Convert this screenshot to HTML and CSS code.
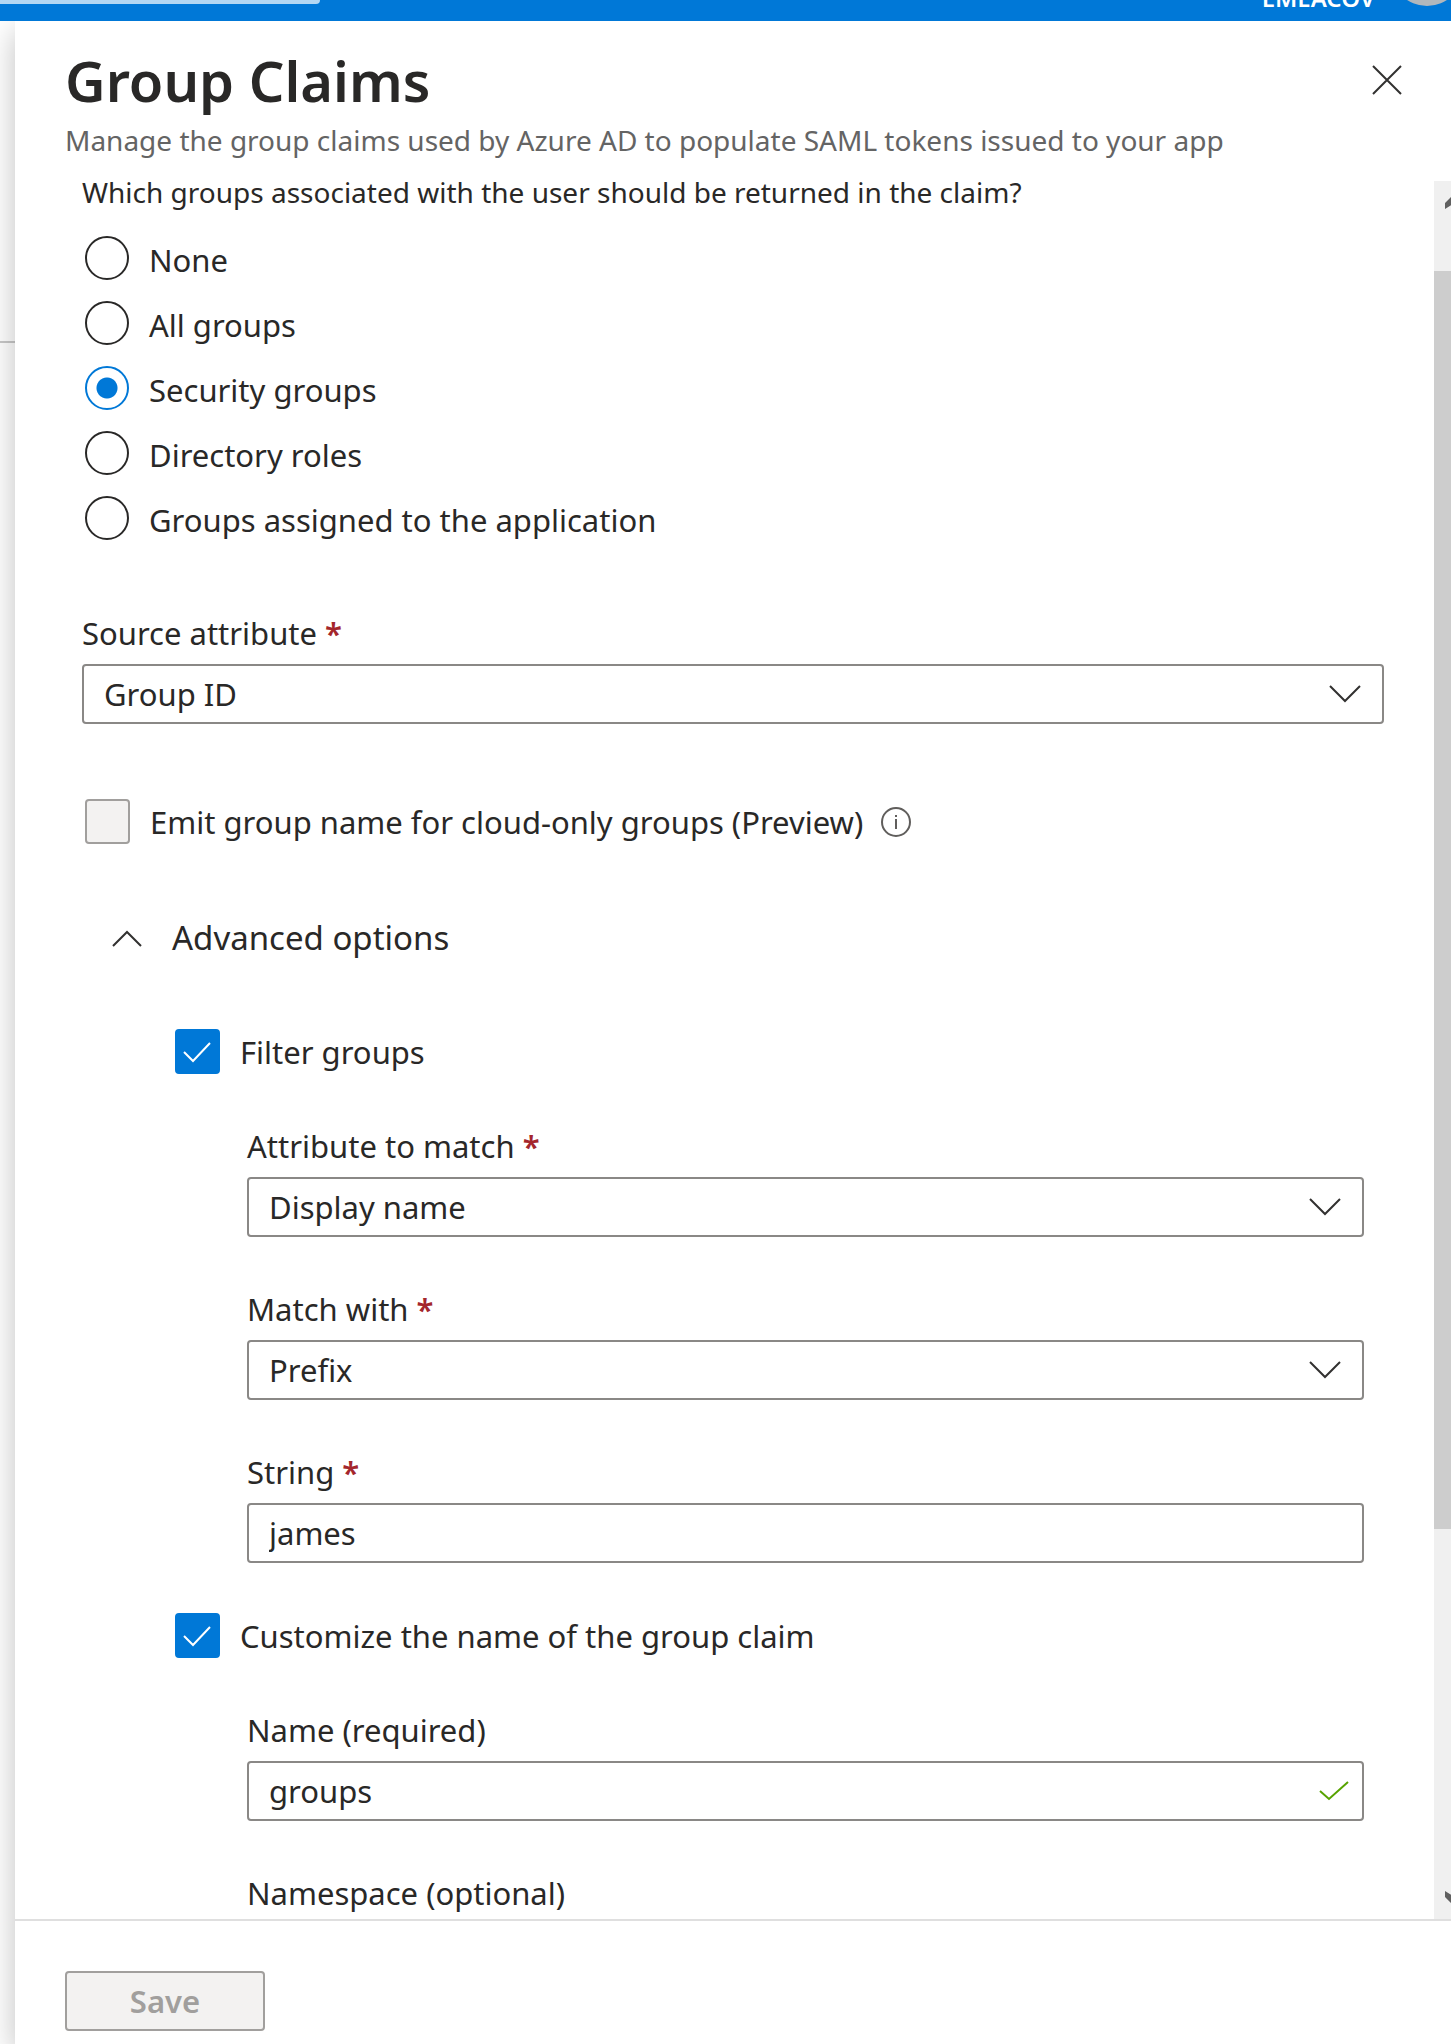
FILE: index.html
```html
<!DOCTYPE html>
<html lang="en">
<head>
    <meta charset="UTF-8">
    <meta name="viewport" content="width=device-width, initial-scale=1.0">
    <title>Group Claims</title>
    <link rel="stylesheet" href="styles.css">
</head>
<body>
    <div class="topbar">
        <div class="search"></div>
        <span class="tenant">EMEACOV</span>
        <div class="avatar"></div>
    </div>
    <div class="main">
        <div class="page-behind"></div>
        <div class="panel">
            <header class="panel-header">
                <div class="title-row">
                    <h1>Group Claims</h1>
                    <button type="button" class="close" aria-label="Close">
                        <svg width="30" height="30" viewBox="0 0 30 30"><path d="M1 1l28 28M29 1L1 29"/></svg>
                    </button>
                </div>
                <p class="subtitle">Manage the group claims used by Azure AD to populate SAML tokens issued to your app</p>
            </header>

            <div class="scroll-area">
                <form class="content" id="claimsForm">
                    <fieldset class="radios">
                        <legend>Which groups associated with the user should be returned in the claim?</legend>
                        <label class="option"><input type="radio" name="groups"> None</label>
                        <label class="option"><input type="radio" name="groups"> All groups</label>
                        <label class="option"><input type="radio" name="groups" checked> Security groups</label>
                        <label class="option"><input type="radio" name="groups"> Directory roles</label>
                        <label class="option"><input type="radio" name="groups"> Groups assigned to the application</label>
                    </fieldset>

                    <div class="field source">
                        <label for="source">Source attribute <span class="required">*</span></label>
                        <div class="control">
                            <select id="source"><option>Group ID</option></select>
                            <svg class="chevron" width="32" height="18" viewBox="0 0 32 18"><path d="M1 1l15 15L31 1"/></svg>
                        </div>
                    </div>

                    <div class="option-row emit">
                        <label class="option"><input type="checkbox" disabled> Emit group name for cloud-only groups (Preview)</label>
                        <svg class="info" width="30" height="30" viewBox="0 0 30 30">
                            <circle cx="15" cy="15" r="14"/>
                            <path d="M15 12v10M15 8v2"/>
                        </svg>
                    </div>

                    <button type="button" class="advanced" aria-expanded="true">
                        <svg width="30" height="17" viewBox="0 0 30 17"><path d="M1 16L15 2l14 14"/></svg>
                        Advanced options
                    </button>

                    <div class="section">
                        <label class="option"><input type="checkbox" checked> Filter groups</label>
                        <div class="fields">
                            <div class="field">
                                <label for="attribute">Attribute to match <span class="required">*</span></label>
                                <div class="control">
                                    <select id="attribute"><option>Display name</option></select>
                                    <svg class="chevron" width="32" height="18" viewBox="0 0 32 18"><path d="M1 1l15 15L31 1"/></svg>
                                </div>
                            </div>
                            <div class="field">
                                <label for="match">Match with <span class="required">*</span></label>
                                <div class="control">
                                    <select id="match"><option>Prefix</option></select>
                                    <svg class="chevron" width="32" height="18" viewBox="0 0 32 18"><path d="M1 1l15 15L31 1"/></svg>
                                </div>
                            </div>
                            <div class="field">
                                <label for="string">String <span class="required">*</span></label>
                                <div class="control">
                                    <input type="text" id="string" value="james">
                                </div>
                            </div>
                        </div>
                    </div>

                    <div class="section">
                        <label class="option"><input type="checkbox" checked> Customize the name of the group claim</label>
                        <div class="fields">
                            <div class="field">
                                <label for="name">Name (required)</label>
                                <div class="control">
                                    <input type="text" id="name" value="groups">
                                    <svg class="valid" width="30" height="20" viewBox="0 0 30 20"><path d="M1 10l9 8L29 1"/></svg>
                                </div>
                            </div>
                            <div class="field">
                                <label for="namespace">Namespace (optional)</label>
                                <div class="control">
                                    <input type="text" id="namespace">
                                </div>
                            </div>
                        </div>
                    </div>
                </form>

                <div class="scrollbar">
                    <svg width="26" height="14" viewBox="0 0 26 14"><path d="M0 14V8l8-8h10l8 8v6l-13-8z"/></svg>
                    <div class="thumb"></div>
                    <svg class="down" width="26" height="14" viewBox="0 0 26 14"><path d="M0 0v6l8 8h10l8-8V0l-13 8z"/></svg>
                </div>
            </div>

            <footer class="panel-footer">
                <button type="submit" form="claimsForm" class="save" disabled>Save</button>
            </footer>
        </div>
    </div>
</body>
</html>
```
FILE: styles.css
```css
* {
    box-sizing: border-box;
}
body {
    margin: 0;
    height: 100vh;
    display: flex;
    flex-direction: column;
    overflow: hidden;
    background: #fff;
    color: #292827;
    font-family: "Noto Sans", "Segoe UI", sans-serif;
    font-size: 31px;
}
button, input, select {
    font: inherit;
    color: inherit;
}
svg {
    flex: none;
    fill: none;
    stroke: #323130;
    stroke-width: 2;
}

/* Portal top bar */
.topbar {
    flex: none;
    height: 21px;
    display: flex;
    align-items: flex-end;
    background: #0078d7;
    overflow: hidden;
    position: relative;
    z-index: 1;
}
.search {
    width: 320px;
    height: 4px;
    margin-bottom: 17px;
    border-radius: 0 0 5px 0;
    background: #b3d7f3;
}
.tenant {
    margin-left: auto;
    margin-bottom: 11px;
    color: #fff;
    font-size: 24px;
    font-weight: 600;
    line-height: 24px;
}
.avatar {
    flex: none;
    width: 72px;
    height: 72px;
    margin: 0 -12px 15px 16px;
    border-radius: 50%;
    background: #b1b7bc;
}

.main {
    flex: 1;
    min-height: 0;
    display: flex;
}
.page-behind {
    flex: none;
    width: 15px;
    height: 322px;
    border-bottom: 2px solid #c8c8c8;
}
.panel {
    flex: 1;
    min-width: 0;
    display: flex;
    flex-direction: column;
    background: #fff;
    box-shadow: 0 10px 30px rgba(0,0,0,0.25);
}
.panel-header {
    padding: 20px 49px 20px 50px;
}
.title-row {
    display: flex;
    justify-content: space-between;
    align-items: center;
}
h1 {
    margin: 0;
    font-size: 56px;
    font-weight: 600;
    line-height: 78px;
}
.close {
    display: flex;
    padding: 0;
    border: none;
    background: none;
    cursor: pointer;
}
.subtitle {
    margin: 0;
    color: #646464;
    font-size: 28px;
    line-height: 42px;
}

.scroll-area {
    flex: 1;
    min-height: 0;
    display: flex;
    overflow: hidden;
}
.content {
    flex: 1;
    min-width: 0;
    padding: 0 50px 0 67px;
}

/* Radios and checkboxes */
.radios {
    display: flex;
    flex-direction: column;
    gap: 17px;
    margin: 0;
    padding: 0;
    border: none;
}
legend {
    margin-bottom: 33px;
    padding: 0;
    font-size: 28px;
    line-height: 22px;
}
.option {
    display: flex;
    align-items: center;
    gap: 20px;
    padding-left: 3px;
    line-height: 44px;
}
.radios .option {
    align-items: flex-start;
    line-height: 48px;
}
input[type="radio"], input[type="checkbox"] {
    appearance: none;
    flex: none;
    margin: 0;
}
input[type="radio"] {
    width: 44px;
    height: 44px;
    border: 2px solid #292827;
    border-radius: 50%;
}
input[type="radio"]:checked {
    border-color: #0078d7;
    background: radial-gradient(circle, #0078d7 10px, #fff 11px);
}
input[type="checkbox"] {
    width: 45px;
    height: 45px;
    border: 2px solid #0078d7;
    border-radius: 4px;
}
input[type="checkbox"]:checked {
    background: #0078d7 url("data:image/svg+xml,%3Csvg xmlns='http://www.w3.org/2000/svg' viewBox='0 0 41 41'%3E%3Cpath d='M7 21l9 9L33 12' fill='none' stroke='white' stroke-width='2'/%3E%3C/svg%3E") center no-repeat;
}
input[type="checkbox"]:disabled {
    border-color: #a19f9d;
    background: #f3f2f1;
}
.option-row {
    display: flex;
    align-items: center;
    gap: 18px;
}
.info {
    stroke: #605e5c;
}

/* Fields */
.field {
    display: flex;
    flex-direction: column;
    gap: 11px;
}
.field label {
    line-height: 40px;
}
.required {
    color: #a4262c;
    font-weight: 600;
}
.control {
    display: grid;
    align-items: center;
}
.control > * {
    grid-area: 1 / 1;
}
select, input[type="text"] {
    appearance: none;
    width: 100%;
    height: 60px;
    padding: 0 20px;
    border: 2px solid #8a8886;
    border-radius: 4px;
    background: #fff;
}
.chevron, .valid {
    justify-self: end;
    margin-right: 23px;
    pointer-events: none;
}
.valid {
    margin-right: 15px;
    stroke: #57a300;
}
.source {
    margin-top: 69px;
}
.emit {
    margin-top: 75px;
}
.advanced {
    display: flex;
    align-items: center;
    gap: 30px;
    margin-top: 71px;
    margin-bottom: 68px;
    padding: 0 0 0 30px;
    border: none;
    background: none;
    font-size: 33px;
    line-height: 46px;
    cursor: pointer;
}
.section {
    margin-bottom: 50px;
    padding: 0 20px 0 90px;
}
.fields {
    display: flex;
    flex-direction: column;
    gap: 52px;
    margin-top: 52px;
    padding-left: 75px;
}

.scrollbar {
    flex: none;
    width: 17px;
    display: flex;
    flex-direction: column;
    align-items: flex-start;
    padding: 14px 0;
    background: #f0f0f0;
    overflow: hidden;
}
.scrollbar svg {
    margin-left: 11px;
    fill: #606060;
    stroke: none;
}
.thumb {
    width: 100%;
    height: calc(73% + 10px);
    margin-top: 62px;
    background: #cdcdcd;
}
.scrollbar .down {
    margin-top: auto;
}

.panel-footer {
    padding: 50px;
    padding-bottom: 13px;
    border-top: 2px solid #dfdfdf;
}
.save {
    width: 200px;
    height: 60px;
    border: 2px solid #a19f9d;
    border-radius: 4px;
    background: #f3f2f1;
    color: #a19f9d;
    font-weight: 600;
}
```
